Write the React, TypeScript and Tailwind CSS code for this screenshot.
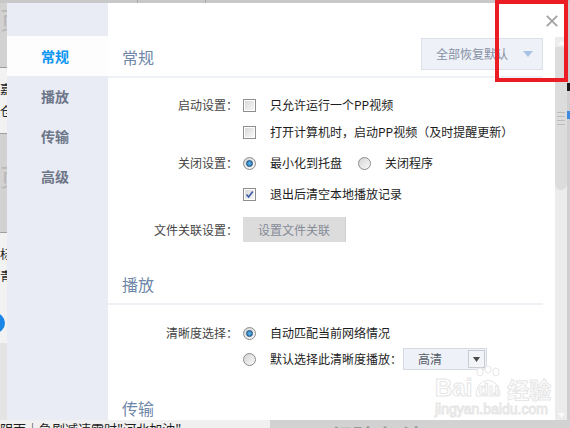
import React from "react";

const Check = ({ checked }: { checked?: boolean }) => (
  <span className="w-[13px] h-[13px] shrink-0 border border-[#8e8e8e] bg-white p-[1px] flex">
    <span className="flex-1 bg-linear-to-br from-[#d9d9d9] to-[#f7f7f7] flex items-center justify-center">
      {checked && (
        <svg width="9" height="9" viewBox="0 0 9 9">
          <path d="M1.5 4.5 L3.6 7 L7.8 1.4" fill="none" stroke="#3b5ba5" strokeWidth="1.6" />
        </svg>
      )}
    </span>
  </span>
);

const Radio = ({ checked }: { checked?: boolean }) => (
  <span className="w-[13px] h-[13px] shrink-0 rounded-full border border-[#8c8c8c] bg-linear-to-br from-[#d4d4d4] to-[#fafafa] flex items-center justify-center">
    {checked && (
      <span className="w-[7px] h-[7px] rounded-full border border-[#1d4f7a] bg-radial from-[#5fb8f0] to-[#1f6fae]" />
    )}
  </span>
);

const Row = ({
  label,
  className = "",
  children,
}: {
  label?: string;
  className?: string;
  children: React.ReactNode;
}) => (
  <div className={`flex items-center h-[26px] ${className}`}>
    <div className="w-[130px] text-right text-[12px] text-[#454545]">{label}</div>
    <div className="ml-[5px] flex items-center text-[12px] text-[#1c1c1c]">{children}</div>
  </div>
);

const SectionHead = ({ title, children }: { title: string; children?: React.ReactNode }) => (
  <div className="h-[41px] flex flex-col">
    <div className="flex-1 flex items-center justify-between pl-[14px]">
      <span className="text-[16px] text-[#6f87a8]">{title}</span>
      {children}
    </div>
    <div className="h-[2px] bg-[#eef1f6]" />
  </div>
);

const navItems = ["常规", "播放", "传输", "高级"];

export default function App() {
  return (
    <div className="relative w-[570px] h-[428px] overflow-hidden bg-[#d6d6d6] flex flex-col font-['Microsoft_YaHei','Noto_Sans_CJK_SC',sans-serif] leading-none">
      {/* page behind the dialog */}
      <div className="h-[3px] shrink-0 bg-[#c8c8c8] flex">
        <div className="w-[137px]" />
        <div className="w-[1px] bg-[#a8a8a8]" />
        <div className="w-[67px]" />
        <div className="w-[1px] bg-[#a8a8a8]" />
      </div>
      <div className="flex h-[417px] shrink-0">
        <div className="w-[7px] shrink-0 flex flex-col bg-[#dadada] overflow-hidden">
          <div className="h-[64px] bg-[#d2d2d2] text-[24px] text-[#b8b8b8] pt-[4px]">页</div>
          <div className="h-[1px] bg-[#9e9e9e]" />
          <div className="h-[65px] bg-[#f2f2f2] text-[12px] text-[#222] pt-[10px] leading-[22px]">
            <div>嘉</div>
            <div>仓</div>
          </div>
          <div className="h-[1px] bg-[#9e9e9e]" />
          <div className="h-[98px] bg-[#d2d2d2] text-[24px] text-[#b8b8b8] pt-[30px]">页</div>
          <div className="h-[1px] bg-[#9e9e9e]" />
          <div className="h-[70px] bg-[#f2f2f2] text-[12px] text-[#222] pt-[10px] leading-[22px]">
            <div>标</div>
            <div>青</div>
          </div>
          <div className="h-[40px] bg-[#f2f2f2] flex items-center">
            <div className="w-[20px] h-[20px] -ml-[15px] rounded-full bg-[#1a87e8]" />
          </div>
          <div className="flex-1 bg-[#e4e4e4]" />
        </div>

        {/* dialog */}
        <div className="w-[560px] shrink-0 flex bg-white">
          <aside className="w-[101px] shrink-0 bg-[#e9ecf4] pt-[33px]">
            {navItems.map((item, i) => (
              <div
                key={item}
                className={`h-[40px] flex items-center pl-[34px] text-[14px] font-bold ${
                  i === 0 ? "bg-[#fdfdfd] text-[#0c96f2]" : "text-[#6d7688]"
                }`}
              >
                {item}
              </div>
            ))}
          </aside>

          <main className="flex-1 flex flex-col min-w-0">
            <div className="h-[34px] shrink-0 flex justify-end items-start pt-[12px] pr-[9px]">
              <svg width="12" height="12" viewBox="0 0 12 12">
                <path d="M0.8 0.8 L11.2 11.2 M11.2 0.8 L0.8 11.2" stroke="#a2a2a2" strokeWidth="1.8" />
              </svg>
            </div>
            <div className="flex flex-1 min-h-0">
              <div className="flex-1 pr-[12px] overflow-hidden">
                <SectionHead title="常规">
                  <div className="w-[122px] h-[32px] self-start mt-[1px] bg-[#eef1f7] border border-[#dce0e8] flex items-center pl-[14px] pr-[9px] justify-between text-[12px] text-[#8690a4]">
                    <span>全部恢复默认</span>
                    <svg width="10" height="6" viewBox="0 0 10 6">
                      <path d="M0 0 H10 L5 6 Z" fill="#a9c3e6" />
                    </svg>
                  </div>
                </SectionHead>

                <Row label="启动设置：" className="mt-[14px]">
                  <Check />
                  <span className="ml-[14px]">只允许运行一个PP视频</span>
                </Row>
                <Row className="mt-[1px]">
                  <Check />
                  <span className="ml-[14px]">打开计算机时，启动PP视频（及时提醒更新）</span>
                </Row>
                <Row label="关闭设置：" className="mt-[5px]">
                  <Radio checked />
                  <span className="ml-[14px]">最小化到托盘</span>
                  <span className="ml-[16px]">
                    <Radio />
                  </span>
                  <span className="ml-[14px]">关闭程序</span>
                </Row>
                <Row className="mt-[5px]">
                  <Check checked />
                  <span className="ml-[14px]">退出后清空本地播放记录</span>
                </Row>
                <div className="flex items-center h-[25px] mt-[10px]">
                  <div className="w-[130px] text-right text-[12px] text-[#454545]">文件关联设置：</div>
                  <div className="ml-[5px] w-[103px] h-[25px] bg-[#dcdcdc] border-r border-[#cfcfcf] flex items-center justify-center text-[12px] text-[#858b97]">
                    设置文件关联
                  </div>
                </div>

                <div className="mt-[22px]">
                  <SectionHead title="播放" />
                </div>
                <Row label="清晰度选择：" className="mt-[15px]">
                  <Radio checked />
                  <span className="ml-[14px]">自动匹配当前网络情况</span>
                </Row>
                <Row>
                  <Radio />
                  <span className="ml-[14px]">默认选择此清晰度播放：</span>
                  <div className="ml-[1px] w-[84px] h-[22px] bg-[#eef1f7] border border-[#d6dae2] flex items-center justify-between pl-[14px] pr-[1px] text-[12px] text-[#555b66]">
                    <span>高清</span>
                    <span className="w-[17px] h-[18px] bg-[#f3f4f7] border border-[#c9ccd3] flex items-center justify-center">
                      <svg width="7" height="5" viewBox="0 0 7 5">
                        <path d="M0 0 H7 L3.5 5 Z" fill="#4a4a4a" />
                      </svg>
                    </span>
                  </div>
                </Row>

                <div className="mt-[16px]">
                  <SectionHead title="传输" />
                </div>
              </div>

              {/* scrollbar */}
              <div className="w-[12px] shrink-0 bg-[#ececec] flex flex-col items-center">
                <svg width="7" height="5" viewBox="0 0 7 5" className="mt-[3px]">
                  <path d="M0 5 H7 L3.5 0 Z" fill="#fafafa" />
                </svg>
                <div className="mt-[2px] w-[12px] h-[143px] bg-[#dcdcdc] rounded-b-[6px] flex flex-col items-center justify-center gap-[3px]">
                  <div className="w-[8px] h-[1px] bg-[#bdbdbd]" />
                  <div className="w-[8px] h-[1px] bg-[#bdbdbd]" />
                  <div className="w-[8px] h-[1px] bg-[#bdbdbd]" />
                  <div className="w-[8px] h-[1px] bg-[#bdbdbd]" />
                </div>
                <div className="flex-1" />
                <svg width="7" height="5" viewBox="0 0 7 5" className="mb-[2px]">
                  <path d="M0 0 H7 L3.5 5 Z" fill="#fafafa" />
                </svg>
              </div>
            </div>
          </main>
        </div>

        <div className="flex-1 bg-[#cfcfcf] flex flex-col">
          <div className="h-[80px]" />
          <div className="h-[8px] bg-[#1a1a1a]" />
          <div className="h-[20px]" />
          <div className="h-[8px] bg-[#3c8be0]" />
        </div>
      </div>
      <div className="h-[8px] shrink-0 bg-[#dedede] overflow-hidden flex">
        <div className="w-[270px] bg-[#f0f0f0] text-[13px] leading-[16px] text-[#1e1e1e] whitespace-nowrap pt-[1px]">
          阴雨｜急剧减速需时"河北加油"
        </div>
        <div className="flex-1 bg-[#d2d2d2] text-[22px] leading-[30px] text-[#9a9a9a] font-bold pl-[30px] whitespace-nowrap">
          12 经验 加油
        </div>
      </div>

      {/* baidu jingyan watermark */}
      <div className="absolute left-[435px] top-[366px] flex flex-col items-start text-white [-webkit-text-stroke:1px_#e6e6e6] font-['Liberation_Sans',sans-serif] pointer-events-none">
        <div className="flex items-end h-[34px]">
          <span className="text-[24px] font-bold leading-[24px]">Bai</span>
          <span className="relative ml-[2px]">
            <svg width="28" height="32" viewBox="0 0 28 32" className="absolute -top-[14px] left-0">
              <g fill="white" stroke="#e6e6e6" strokeWidth="1">
                <ellipse cx="6" cy="6" rx="3" ry="4" />
                <ellipse cx="14" cy="3.5" rx="3" ry="3.5" />
                <ellipse cx="22" cy="6" rx="3" ry="4" />
                <path d="M2 30 Q2 16 14 14 Q26 16 26 30 Z" />
              </g>
            </svg>
            <span className="relative text-[17px] font-bold leading-[20px] pl-[4px] pr-[4px]">du</span>
          </span>
          <span className="ml-[4px] text-[22px] leading-[24px] font-['Noto_Sans_CJK_SC',sans-serif] font-bold">经验</span>
        </div>
        <span className="mt-[2px] text-[14px] leading-[14px]">jingyan.baidu.com</span>
      </div>

      {/* red highlight box */}
      <div className="absolute left-[495px] top-0 w-[73px] h-[82px] border-4 border-[#ec1c24]" />
    </div>
  );
}
